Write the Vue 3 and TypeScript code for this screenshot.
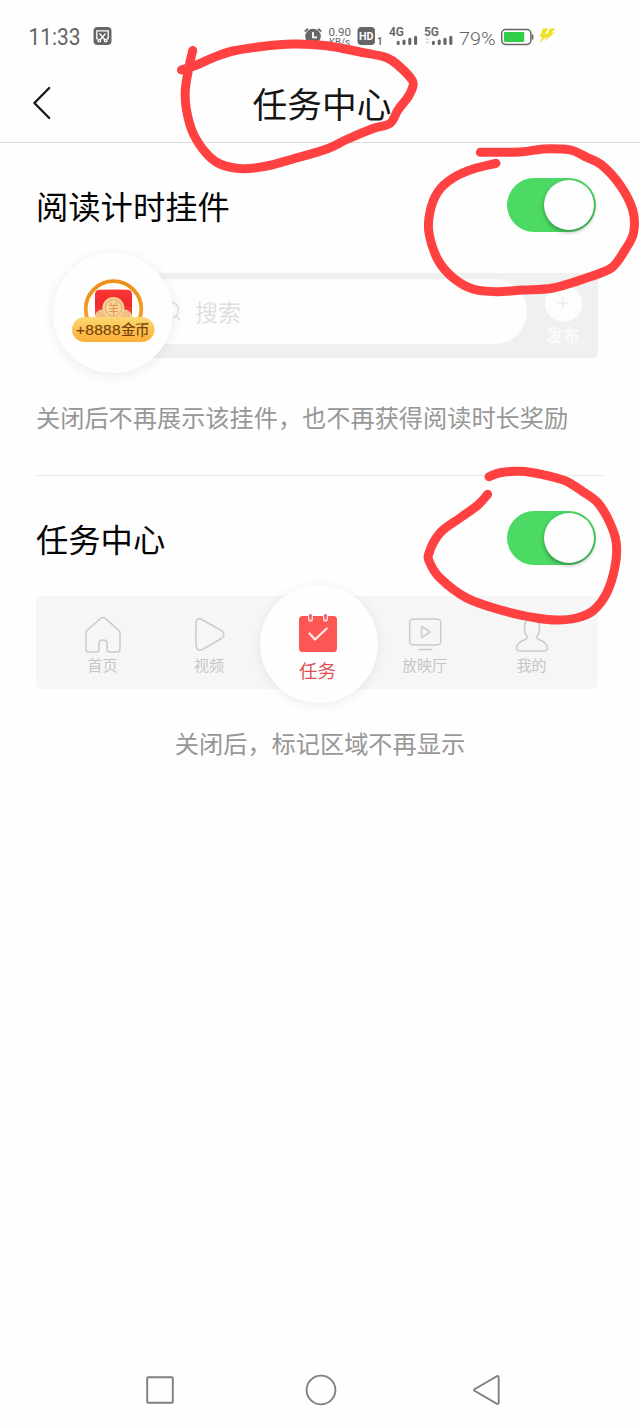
<script setup lang="ts">
import { ref } from 'vue'

type Point = [number, number]

const readingWidget = ref(true)
const taskCenter = ref(true)

// Hand-drawn marker strokes, stored as sampled points
const strokes: Point[][] = [
  [[192.7, 50.5], [189, 67], [185.3, 90], [186.5, 110], [193, 133], [206, 153], [220, 164], [243, 168.7], [266.7, 166], [293, 159], [326.7, 149], [346.7, 139.5], [373, 128.5], [390, 123.5], [398, 110], [408, 97], [413, 86], [411.7, 79.5], [400, 67], [386.7, 57.7], [360, 52], [326.7, 45.7], [293, 44], [260, 46.7], [233, 51], [213, 57.7], [196.7, 65], [181.5, 70]],
  [[480.3, 152.3], [520, 152], [543, 149], [560, 149], [573.3, 150.7], [586.7, 157.3], [601.7, 165], [620, 185], [632.7, 210], [633.5, 233], [625, 250], [611.7, 267.7], [590, 276.7], [553, 288], [523, 290], [496.7, 291.7], [473, 289], [453, 277.7], [438, 260], [429, 233], [430, 211.7], [438, 191.7], [453, 178], [473, 169], [496, 163.3]],
  [[489, 476.7], [500, 472.7], [520, 471.3], [543, 474.7], [565, 480.7], [583, 491.7], [598, 503], [610, 523], [616.3, 543], [615, 566.7], [606.7, 593], [593, 610.7], [576.7, 618], [556.7, 620], [536.7, 618], [503, 610.7], [466.7, 598], [440, 578], [430, 563], [429, 553], [440, 533], [460, 518], [478, 505], [487.7, 494.3]],
]

// Catmull-Rom spline through the points, expressed as cubic segments
function smooth(pts: Point[]): string {
  let d = `M${pts[0][0]} ${pts[0][1]}`
  for (let i = 0; i < pts.length - 1; i++) {
    const a = pts[Math.max(i - 1, 0)]
    const b = pts[i]
    const c = pts[i + 1]
    const e = pts[Math.min(i + 2, pts.length - 1)]
    d += `C${b[0] + (c[0] - a[0]) / 6} ${b[1] + (c[1] - a[1]) / 6} ${c[0] - (e[0] - b[0]) / 6} ${c[1] - (e[1] - b[1]) / 6} ${c[0]} ${c[1]}`
  }
  return d
}
</script>

<template>
  <div class="screen">
    <div class="status">
      <svg width="640" height="72" viewBox="0 0 640 72">
        <g class="status-text">
          <text x="28.5" y="44.5" font-size="23" textLength="52" lengthAdjust="spacingAndGlyphs">11:33</text>
          <text x="328.5" y="35.8" font-size="11.5" textLength="22.500" lengthAdjust="spacingAndGlyphs">0.90</text>
          <text x="329" y="46.300" font-size="10" textLength="21" lengthAdjust="spacingAndGlyphs">KB/s</text>
          <text x="377" y="45" font-size="10" class="b">1</text>
          <text x="389" y="35.9" font-size="12" class="b" textLength="15" lengthAdjust="spacingAndGlyphs">4G</text>
          <text x="424" y="35.9" font-size="12" class="b" textLength="15" lengthAdjust="spacingAndGlyphs">5G</text>
          <text x="459" y="45.3" font-size="19" class="light" textLength="36.5" lengthAdjust="spacingAndGlyphs">79%</text>
        </g>
        <rect x="93.5" y="27" width="18" height="18" rx="4" fill="#666" />
        <g fill="none" stroke="#fff" stroke-width="1.3">
          <path d="M98 38.5H96.8V30.8H108.2V38.5H107" />
          <path d="M99.5 33.5L105 40M105.5 33.5L100 40" />
          <circle cx="99.3" cy="40.6" r="1.3" />
          <circle cx="105.7" cy="40.6" r="1.3" />
        </g>
        <circle cx="313" cy="36.5" r="7.8" fill="#666" />
        <path d="M304.8 31.5L308 28.7M321.2 31.5L318 28.7" stroke="#666" stroke-width="1.8" />
        <path d="M313 32V37.3H317" fill="none" stroke="#fff" stroke-width="1.8" />
        <rect x="357.5" y="27" width="17.5" height="18" rx="4" fill="#666" />
        <text x="359" y="40" font-size="11" class="hd" textLength="14.5" lengthAdjust="spacingAndGlyphs">HD</text>
        <g stroke="#666" stroke-width="3.1" stroke-linecap="round">
          <path d="M398.2 42.4V43.4M404 41V43.4M409.8 39.2V43.4M415.6 37.2V43.4" />
          <path d="M433.4 42.4V43.4M439.2 41V43.4M445 39.2V43.4M450.8 37.2V43.4" />
        </g>
        <path d="M425 40l2.5-2.5 2.5 2.5zM425 41.5h5l-2.5 2.5z" fill="#d5d5d5" />
        <rect x="501.7" y="29.6" width="29.2" height="14.8" rx="3.8" fill="#fff" stroke="#666" stroke-width="1.5" />
        <path d="M532.6 34.5V39.5" stroke="#666" stroke-width="1.6" />
        <rect x="504" y="32" width="20.2" height="10" rx="1" fill="#31cf49" />
        <path d="M543 28.5H548.5L545 34H549.5L539.5 43L542.5 37H539.5Z" fill="#f2df28" />
        <path d="M550 28.5H555.5L551.5 32.5H555L544 41.5L547.8 35.5H546.5Z" fill="#f2df28" />
      </svg>
    </div>

    <header class="header">
      <svg class="back" width="20" height="36" viewBox="0 0 20 36">
        <path d="M17.2 3L2.4 18L17.2 33" fill="none" stroke="#151515" stroke-width="2.3" stroke-linecap="round" stroke-linejoin="round" />
      </svg>
      <h1>任务中心</h1>
    </header>

    <section class="first">
      <div class="row">
        <h2>阅读计时挂件</h2>
        <button class="toggle" :class="{ on: readingWidget }" @click="readingWidget = !readingWidget"><i /></button>
      </div>
      <div class="search-preview">
        <div class="search-bar">
          <div class="search-input">
            <svg width="22" height="24" viewBox="0 0 22 24"><circle cx="8.500" cy="11" r="8" /><path d="M14 17L17.500 20.500" /></svg>
            <span>搜索</span>
          </div>
          <div class="publish">
            <div class="plus"><svg width="14" height="14" viewBox="0 0 14 14"><path d="M7 1V13M1 7H13" stroke="#eee" stroke-width="1.6" /></svg></div>
            <span>发布</span>
          </div>
        </div>
        <div class="coin-bubble">
          <svg width="120" height="120" viewBox="53 253 120 120">
            <defs>
              <linearGradient id="pill" x1="0" y1="0" x2="0" y2="1"><stop offset="0" stop-color="#fbd873" /><stop offset="1" stop-color="#fcae35" /></linearGradient>
              <linearGradient id="ring" x1="0" y1="0" x2="0" y2="1"><stop offset="0" stop-color="#ef8e18" /><stop offset="1" stop-color="#f9a333" /></linearGradient>
              <linearGradient id="packet" x1="0" y1="0" x2="0" y2="1"><stop offset="0" stop-color="#fc3535" /><stop offset=".5" stop-color="#ee292c" /><stop offset="1" stop-color="#f46f55" /></linearGradient>
            </defs>
            <circle cx="113.5" cy="309" r="27.8" fill="#fffefd" stroke="url(#ring)" stroke-width="3.8" />
            <path d="M95 321V294.5Q95 290 100 289.8Q113.5 289 127 289.8Q132 290 132 294.5V321Z" fill="url(#packet)" />
            <circle cx="103" cy="318" r="8" fill="#f4bd84" stroke="#fad5a6" />
            <circle cx="124" cy="318" r="8" fill="#f4bd84" stroke="#fad5a6" />
            <circle cx="113.4" cy="308" r="11" fill="#f8cf91" />
            <circle cx="113.4" cy="308" r="8.2" fill="#f9d59b" stroke="#e8a665" stroke-width="1" />
            <path d="M110 302.5L112 305M117 302.5L115 305M109 305.5H118M109.5 308.5H117.5M109 311.5H118M113.5 305.5V315" stroke="#df9856" stroke-width="1.1" />
            <rect x="72" y="317" width="82.5" height="25" rx="12.5" fill="url(#pill)" />
            <text x="76" y="334.9" font-size="15.5" textLength="44.5" class="reward">+8888</text>
            <text x="121" y="334.900" font-size="14.5" textLength="28.5" class="reward">金币</text>
          </svg>
        </div>
      </div>
      <p>关闭后不再展示该挂件，也不再获得阅读时长奖励</p>
    </section>

    <section class="second">
      <div class="row">
        <h2>任务中心</h2>
        <button class="toggle" :class="{ on: taskCenter }" @click="taskCenter = !taskCenter"><i /></button>
      </div>
      <div class="tabs">
        <div class="tab home">
          <svg width="40" height="40" viewBox="0 0 40 40"><path d="M4 15.5Q3 16.5 3 18V34Q3 37 5.5 37H13.5Q16 37 16 34.5V28.5Q16 25 20 25Q24 25 24 28.5V34.5Q24 37 26.5 37H34.5Q37 37 37 34V18Q37 16.5 36 15.5L22.5 3.5Q20 1.5 17.5 3.5Z" /></svg>
          <span>首页</span>
        </div>
        <div class="tab video">
          <svg width="40" height="40" viewBox="0 0 40 40"><path d="M7 7.5Q7.5 2.5 12 4L32.5 15.5Q37.5 20 32.5 23.5L12.5 34.8Q8 36 7.3 32Q6.3 20 7 7.5Z" /></svg>
          <span>视频</span>
        </div>
        <div class="task">
          <svg width="44" height="42" viewBox="0 0 44 42">
            <rect x="3" y="4" width="38" height="36" rx="3.5" fill="#fc5655" />
            <path d="M12.7 3V6.5Q12.7 9 14.5 9Q16.3 9 16.3 6.5V3M27.7 3V6.5Q27.7 9 29.5 9Q31.3 9 31.3 6.5V3" fill="#f4666a" stroke="#ffe3e3" stroke-width="1.4" />
            <path d="M14.5 2V6M29.5 2V6" stroke="#e65c60" stroke-width="2" />
            <path d="M13.5 21.5L19 27.5L30.7 16.5" fill="none" stroke="#ffe9e5" stroke-width="2.3" stroke-linecap="round" stroke-linejoin="round" />
          </svg>
          <span>任务</span>
        </div>
        <div class="tab cinema">
          <svg width="40" height="40" viewBox="0 0 40 40"><rect x="4.7" y="4" width="31" height="26" rx="3.5" /><path d="M16.5 12.5Q16.5 11.3 17.6 12L24 16.2Q25 17 24 17.7L17.6 22Q16.5 22.5 16.5 21.3ZM14 34.5H26.5" /></svg>
          <span>放映厅</span>
        </div>
        <div class="tab mine">
          <svg width="40" height="40" viewBox="0 0 40 40"><path d="M15.500 22.500C13 19 12.300 16 12.500 11.500C12.800 6 15.500 3.500 20 3.500C24.500 3.500 27.200 6 27.500 11.500C27.700 16 27 19 24.500 22.500C25.500 25.500 34.500 25 35.500 33Q35.700 36 32 36H8Q4.300 36 4.500 33C5.500 25 14.500 25.500 15.500 22.500Z" /></svg>
          <span>我的</span>
        </div>
      </div>
      <p class="center">关闭后，标记区域不再显示</p>
    </section>

    <footer class="nav">
      <svg width="30" height="30" viewBox="0 0 30 30"><rect x="2.200" y="2.200" width="25.600" height="25.600" rx="1" /></svg>
      <svg width="32" height="32" viewBox="0 0 32 32"><circle cx="16" cy="16" r="14.400" /></svg>
      <svg width="30" height="32" viewBox="0 0 30 32"><path d="M2.500 15.200Q1.700 16 2.500 16.800L25 29.900Q26.700 30.300 26.700 28.800V3.200Q26.700 1.700 25 2.100Z" /></svg>
    </footer>

    <svg class="marker" width="640" height="700" viewBox="0 0 640 700">
      <path v-for="(s, i) in strokes" :key="i" :d="smooth(s)" />
    </svg>
  </div>
</template>

<style>
body {
  background: #fefefe;
}
</style>

<style scoped>
.screen {
  position: relative;
  box-sizing: border-box;
  width: 640px;
  height: 1427px;
  overflow: hidden;
  background: #fefefe;
  display: flex;
  flex-direction: column;
  font-family: "Liberation Sans", "Noto Sans CJK SC", sans-serif;
}
svg {
  display: block;
}
.status {
  height: 72px;
}
.status-text {
  font-family: Roboto, sans-serif;
  fill: #646464;
}
.b {
  font-weight: 600;
}
.light {
  font-weight: 300;
}
.hd {
  font-family: Roboto, sans-serif;
  font-weight: 700;
  fill: #fff;
}
.header {
  box-sizing: border-box;
  height: 71px;
  border-bottom: 1px solid #dcdcdc;
  display: grid;
  grid-template-columns: 70px 1fr 70px;
  align-items: center;
  padding-bottom: 6px;
}
.back {
  margin: -2px 0 0 32px;
}
h1, h2, p {
  margin: 0;
  font-weight: 400;
}
h1 {
  font-size: 34.7px;
  line-height: 40px;
  text-align: center;
  color: #151515;
  padding: 4px 0 0 4px;
}
section {
  box-sizing: border-box;
  margin: 0 36px;
}
.first {
  height: 333px;
  padding-top: 35px;
  border-bottom: 1px solid #e9e9e9;
}
.second {
  padding-top: 35px;
}
.row {
  display: flex;
  justify-content: space-between;
  align-items: center;
  height: 54px;
  padding-right: 8px;
}
h2 {
  font-size: 32.3px;
  line-height: 48px;
  padding-top: 5px;
  color: #050505;
}
.toggle {
  border: 0;
  padding: 2px;
  width: 89px;
  height: 54px;
  border-radius: 27px;
  background: #ddd;
  display: flex;
}
.toggle.on {
  background: #4cd964;
  justify-content: flex-end;
}
.toggle i {
  width: 50px;
  height: 50px;
  border-radius: 50%;
  background: #fefefe;
  box-shadow: 0 2px 4px rgba(0, 0, 0, 0.36);
}
.search-preview {
  display: grid;
  grid-template-columns: 562px;
  align-items: center;
  height: 120px;
  margin-top: 21px;
}
.search-bar {
  grid-area: 1 / 1;
  box-sizing: border-box;
  height: 85px;
  margin: 4px 0 0 60px;
  background: #f0f0f0;
  border-radius: 6px;
  padding-top: 6px;
  display: flex;
}
.search-input {
  width: 432px;
  height: 65px;
  border-radius: 0 33px 33px 0;
  background: #fefefe;
  box-sizing: border-box;
  padding-left: 66px;
  display: flex;
  align-items: center;
  font-size: 23px;
  color: #dedede;
}
.search-input svg {
  fill: none;
  stroke: #e0e0e0;
  stroke-width: 1.6;
  stroke-linecap: round;
}
.search-input span {
  margin-left: 11px;
  line-height: 34px;
  padding-top: 3px;
}
.publish {
  width: 70px;
  margin-left: 1.5px;
  padding-top: 6px;
  display: flex;
  flex-direction: column;
  align-items: center;
  color: #fafafa;
  font-size: 16.500px;
  font-weight: 700;
  line-height: 22px;
}
.plus {
  width: 37px;
  height: 37px;
  border-radius: 50%;
  background: #fdfdfd;
  display: flex;
  align-items: center;
  justify-content: center;
}
.publish span {
  margin-top: 3px;
}
.coin-bubble {
  grid-area: 1 / 1;
  z-index: 1;
  width: 120px;
  height: 120px;
  margin-left: 17px;
  border-radius: 50%;
  background: #fefefe;
  box-shadow: 0 2px 14px rgba(0, 0, 0, 0.08);
}
.reward {
  fill: #78430a;
  stroke: #78430a;
  stroke-width: 0.2px;
}
p {
  font-size: 24.200px;
  line-height: 36px;
  color: #979797;
  white-space: nowrap;
}
.first p {
  margin-top: 28px;
}
.tabs {
  width: 562px;
  height: 93px;
  margin-top: 31px;
  border-radius: 6px;
  background: #f6f6f6;
  display: grid;
  grid-template-columns: 133px 80px 139px 75px 135px;
  grid-template-rows: 93px;
  align-items: center;
}
.tab {
  display: flex;
  flex-direction: column;
  align-items: center;
  color: #c6c6c6;
  font-size: 15px;
  line-height: 20px;
  padding-top: 5px;
}
.tab span {
  padding-top: 1px;
}
.tab.cinema {
  margin-left: -2px;
}
.tab.mine {
  margin-left: 2px;
}
.tab svg {
  fill: none;
  stroke: #cacaca;
  stroke-width: 1.500;
  stroke-linecap: round;
}
.task {
  width: 118px;
  height: 118px;
  margin: 3px 0 0 11px;
  border-radius: 50%;
  background: #fefefe;
  box-shadow: 0 2px 12px rgba(0, 0, 0, 0.08);
  display: flex;
  flex-direction: column;
  align-items: center;
  color: #e25055;
  font-size: 18.500px;
  line-height: 26px;
  box-sizing: border-box;
  padding: 27px 3px 0 0;
}
.task span {
  margin-top: 5px;
}
.center {
  text-align: center;
  margin-top: 38px;
}
.nav {
  margin-top: auto;
  height: 75px;
  display: flex;
  justify-content: space-between;
  align-items: center;
  padding: 0 138px 0 145px;
}
.nav svg:nth-child(2) {
  margin-right: 5px;
}
.nav svg {
  fill: none;
  stroke: #808080;
  stroke-width: 1.900;
}
.marker {
  position: absolute;
  inset: 0 auto auto 0;
  z-index: 5;
  pointer-events: none;
  fill: none;
  stroke: #ff4141;
  stroke-width: 9;
  stroke-linecap: round;
  stroke-linejoin: round;
}
</style>
